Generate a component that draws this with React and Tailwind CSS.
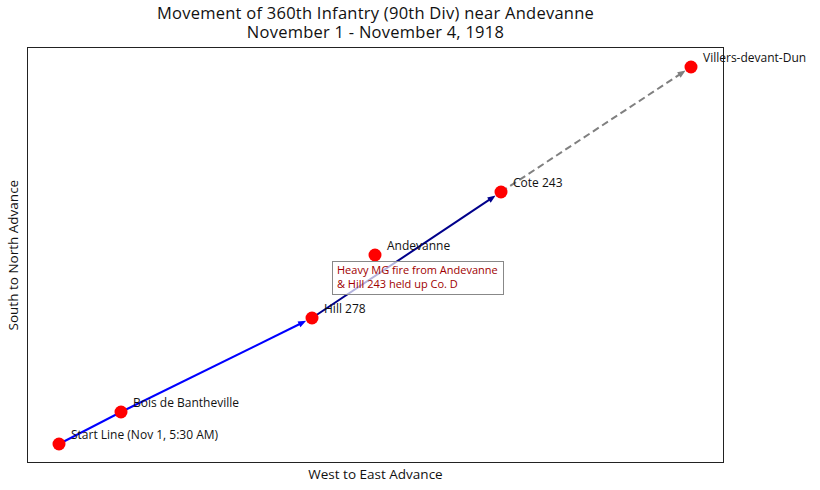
import React from "react";

// plot coordinates are relative to the axes frame (697 x 416)
const points = [
  { name: "Start Line (Nov 1, 5:30 AM)", x: 32, y: 397 },
  { name: "Bois de Bantheville", x: 94, y: 365 },
  { name: "Hill 278", x: 285, y: 271 },
  { name: "Andevanne", x: 348, y: 208 },
  { name: "Cote 243", x: 474, y: 145 },
  { name: "Villers-devant-Dun", x: 664, y: 20 },
];

const legs = [
  { from: 0, to: 1, color: "#0000ff", arrow: false },
  { from: 1, to: 2, color: "#0000ff", arrow: true },
  { from: 2, to: 4, color: "#00008b", arrow: true },
  { from: 4, to: 5, color: "#808080", arrow: true, dashed: true },
];

function Leg({ a, b, color, arrow, dashed }) {
  const dx = b.x - a.x;
  const dy = b.y - a.y;
  const len = Math.hypot(dx, dy);
  const ux = dx / len;
  const uy = dy / len;
  const tipX = b.x - ux * 6.5;
  const tipY = b.y - uy * 6.5;
  const baseX = tipX - ux * 8;
  const baseY = tipY - uy * 8;
  const px = -uy * 3.2;
  const py = ux * 3.2;
  return (
    <g>
      <line
        x1={a.x}
        y1={a.y}
        x2={arrow ? baseX + ux * 2 : b.x}
        y2={arrow ? baseY + uy * 2 : b.y}
        stroke={color}
        strokeWidth="2"
        strokeDasharray={dashed ? "7 4" : undefined}
      />
      {arrow && (
        <polygon
          points={`${tipX},${tipY} ${baseX + px},${baseY + py} ${baseX - px},${baseY - py}`}
          fill={color}
        />
      )}
    </g>
  );
}

function MovementPlot() {
  return (
    <svg width="697" height="416" viewBox="0 0 697 416" className="block overflow-visible">
      <rect x="0.5" y="0.5" width="696" height="415" fill="white" stroke="#222" strokeWidth="1" />
      {legs.map((l, i) => (
        <Leg key={i} a={points[l.from]} b={points[l.to]} color={l.color} arrow={l.arrow} dashed={l.dashed} />
      ))}
      {points.map((p) => (
        <circle key={p.name} cx={p.x} cy={p.y} r="6.5" fill="#ff0000" />
      ))}
      <rect x="305.5" y="214.5" width="171" height="33" fill="white" fillOpacity="0.7" stroke="#888" strokeWidth="1" />
      <text x="310" y="227" className="fill-[#a00000] text-[11px]">
        Heavy MG fire from Andevanne
      </text>
      <text x="310" y="240.5" className="fill-[#a00000] text-[11px]">
        &amp; Hill 243 held up Co. D
      </text>
      {points.map((p) => (
        <text key={p.name} x={p.x + 12} y={p.y - 5.5} className="fill-[#111] text-[12px]">
          {p.name}
        </text>
      ))}
    </svg>
  );
}

export default function App() {
  return (
    <div className="w-[820px] h-[490px] bg-white text-[#111] font-['Open_Sans',sans-serif]">
      <div className="grid grid-cols-[27px_697px_96px] grid-rows-[47px_416px_27px]">
        <div />
        <div className="flex flex-col items-center pt-[4px] text-[16.5px] leading-[18.5px] tracking-[0.25px]">
          <span>Movement of 360th Infantry (90th Div) near Andevanne</span>
          <span>November 1 - November 4, 1918</span>
        </div>
        <div />

        <div className="flex items-center justify-center">
          <span className="-rotate-90 whitespace-nowrap text-[13.5px]">South to North Advance</span>
        </div>
        <MovementPlot />
        <div />

        <div />
        <div className="flex justify-center pt-[1px] text-[13.5px]">West to East Advance</div>
        <div />
      </div>
    </div>
  );
}
